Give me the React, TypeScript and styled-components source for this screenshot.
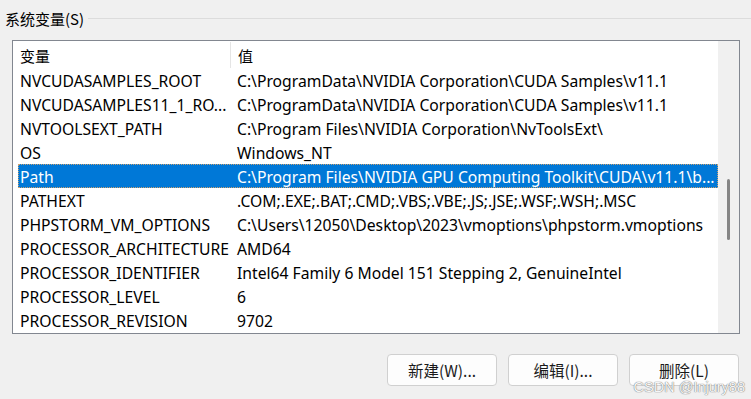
import styled, { createGlobalStyle } from 'styled-components'

const GlobalStyle = createGlobalStyle`
  html, body {
    margin: 0;
    padding: 0;
    background: #f0f0f0;
  }
  body {
    font-family: "Noto Sans", "Noto Sans CJK SC", sans-serif;
    color: #000000;
  }
`

const Page = styled.div`
  width: 751px;
  height: 399px;
  background: #f0f0f0;
  position: relative;
  overflow: hidden;
`

const GroupTitle = styled.div`
  display: flex;
  align-items: center;
  height: 36px;
  padding-left: 5px;
  font-size: 15px;
`

const GroupLabel = styled.span`
  font-family: "Noto Sans CJK SC", "Noto Sans", sans-serif;
  margin-right: 4px;
  line-height: 1;
`

const GroupLine = styled.div`
  flex: 1;
  height: 1px;
  background: #dcdcdc;
`

const ListBox = styled.div`
  display: flex;
  margin-left: 12px;
  margin-top: 4px;
  width: 728px;
  height: 294px;
  box-sizing: border-box;
  border: 1px solid #828790;
  background: #ffffff;
  overflow: hidden;
`

const ListArea = styled.div`
  flex: 1;
  display: flex;
  flex-direction: column;
  padding-left: 5px;
  overflow: hidden;
`

const HeaderRow = styled.div`
  display: flex;
  height: 27px;
  flex-shrink: 0;
  font-family: "Noto Sans CJK SC", "Noto Sans", sans-serif;
  font-size: 15px;
`

const HeaderCell = styled.div<{ $w?: number; $divider?: boolean }>`
  display: flex;
  align-items: center;
  box-sizing: border-box;
  width: ${(p) => (p.$w ? `${p.$w}px` : 'auto')};
  flex: ${(p) => (p.$w ? 'none' : '1')};
  padding-left: ${(p) => (p.$divider ? 2 : 7)}px;
  margin-top: 1px;
  border-right: ${(p) => (p.$divider ? '1px solid #e5e5e5' : 'none')};
`

const Row = styled.div<{ $selected?: boolean }>`
  display: flex;
  height: 24px;
  flex-shrink: 0;
  box-sizing: border-box;
  font-size: 15.7px;
  padding-top: 1px;
  background: ${(p) => (p.$selected ? '#0078d7' : 'transparent')};
  color: ${(p) => (p.$selected ? '#ffffff' : '#000000')};
  border: 1px dotted ${(p) => (p.$selected ? '#c9a070' : 'transparent')};
`

const Cell = styled.div<{ $w?: number }>`
  display: flex;
  align-items: center;
  box-sizing: border-box;
  width: ${(p) => (p.$w ? `${p.$w}px` : 'auto')};
  flex: ${(p) => (p.$w ? 'none' : '1')};
  min-width: 0;
  padding-left: ${(p) => (p.$w ? 1 : 6)}px;
  white-space: nowrap;
  overflow: hidden;
`

const ScrollTrack = styled.div`
  width: 21px;
  flex-shrink: 0;
  background: #f0f0f0;
  display: flex;
  justify-content: center;
  padding-top: 138px;
  box-sizing: border-box;
`

const ScrollThumb = styled.div`
  width: 3px;
  height: 61px;
  border-radius: 2px;
  background: #858585;
`

const ButtonBar = styled.div`
  display: flex;
  justify-content: flex-end;
  gap: 11px;
  padding-right: 12px;
  margin-top: 20px;
`

const Button = styled.button`
  width: 110px;
  height: 32px;
  box-sizing: border-box;
  background: #fdfdfd;
  border: 1px solid #d0d0d0;
  border-radius: 4px;
  font-family: "Noto Sans CJK SC", "Noto Sans", sans-serif;
  font-size: 15.5px;
  color: #1a1a1a;
  padding: 0;
`

const Watermark = styled.div`
  position: absolute;
  right: 6px;
  bottom: 4px;
  font-family: "Liberation Sans", "Noto Sans CJK SC", sans-serif;
  font-size: 14.5px;
  color: #f6f6f6;
  text-shadow: 0 0 1px #7a7a7a, 0 0 1px #7a7a7a;
`

const rows: [string, string][] = [
  ['NVCUDASAMPLES_ROOT', 'C:\\ProgramData\\NVIDIA Corporation\\CUDA Samples\\v11.1'],
  ['NVCUDASAMPLES11_1_RO...', 'C:\\ProgramData\\NVIDIA Corporation\\CUDA Samples\\v11.1'],
  ['NVTOOLSEXT_PATH', 'C:\\Program Files\\NVIDIA Corporation\\NvToolsExt\\'],
  ['OS', 'Windows_NT'],
  ['Path', 'C:\\Program Files\\NVIDIA GPU Computing Toolkit\\CUDA\\v11.1\\b...'],
  ['PATHEXT', '.COM;.EXE;.BAT;.CMD;.VBS;.VBE;.JS;.JSE;.WSF;.WSH;.MSC'],
  ['PHPSTORM_VM_OPTIONS', 'C:\\Users\\12050\\Desktop\\2023\\vmoptions\\phpstorm.vmoptions'],
  ['PROCESSOR_ARCHITECTURE', 'AMD64'],
  ['PROCESSOR_IDENTIFIER', 'Intel64 Family 6 Model 151 Stepping 2, GenuineIntel'],
  ['PROCESSOR_LEVEL', '6'],
  ['PROCESSOR_REVISION', '9702'],
]

const SystemVariables = () => {
  return (
    <Page>
      <GroupTitle>
        <GroupLabel>系统变量(S)</GroupLabel>
        <GroupLine />
      </GroupTitle>

      <ListBox>
        <ListArea>
          <HeaderRow>
            <HeaderCell $w={213} $divider>
              变量
            </HeaderCell>
            <HeaderCell>值</HeaderCell>
          </HeaderRow>
          {rows.map(([name, value]) => (
            <Row key={name} $selected={name === 'Path'}>
              <Cell $w={212}>{name}</Cell>
              <Cell>{value}</Cell>
            </Row>
          ))}
        </ListArea>
        <ScrollTrack>
          <ScrollThumb />
        </ScrollTrack>
      </ListBox>

      <ButtonBar>
        <Button>新建(W)...</Button>
        <Button>编辑(I)...</Button>
        <Button>删除(L)</Button>
      </ButtonBar>

      <Watermark>CSDN @Injury88</Watermark>
    </Page>
  )
}

export default function App() {
  return (
    <>
      <GlobalStyle />
      <SystemVariables />
    </>
  )
}
